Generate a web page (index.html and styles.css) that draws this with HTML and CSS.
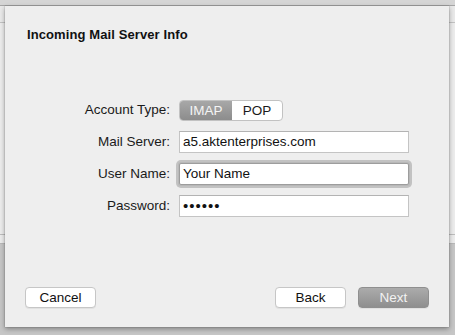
FILE: index.html
```html
<!DOCTYPE html>
<html>
<head>
<meta charset="utf-8">
<link rel="stylesheet" href="styles.css">
</head>
<body>
<div class="topbar"></div>
<div class="window">
  <div class="side">
    <div class="s1"></div><div class="s2"></div><div class="s3"></div>
  </div>
  <div class="center">
    <div class="sheet">
      <h1 class="title">Incoming Mail Server Info</h1>
      <div class="form">
        <div class="label">Account Type:</div>
        <div class="seg"><span class="seg-item on">IMAP</span><span class="seg-item off">POP</span></div>
        <div class="label">Mail Server:</div>
        <div class="field">a5.aktenterprises.com</div>
        <div class="label">User Name:</div>
        <div class="field focus">Your Name</div>
        <div class="label">Password:</div>
        <div class="field pw">••••••</div>
      </div>
      <div class="buttons">
        <button class="btn">Cancel</button>
        <div class="right">
          <button class="btn">Back</button>
          <button class="btn primary">Next</button>
        </div>
      </div>
    </div>
  </div>
  <div class="side">
    <div class="s1"></div><div class="s2"></div><div class="s3"></div>
  </div>
</div>
</body>
</html>
```
FILE: styles.css
```css
html, body {
  margin: 0;
  padding: 0;
}
body {
  width: 455px;
  height: 335px;
  overflow: hidden;
  background: #c6c6c6;
  font-family: "Liberation Sans", Arial, sans-serif;
  font-size: 13px;
  color: #1a1a1a;
}
.topbar {
  height: 5px;
  background: #d5d5d5;
  border-bottom: 1px solid #a6a6a6;
}
.window {
  display: grid;
  grid-template-columns: 5px 444px 6px;
  height: 329px;
  background: #c6c6c6;
}
.side {
  display: flex;
  flex-direction: column;
}
.s1 {
  height: 16px;
  background: #e9e9e9;
  border-bottom: 1px solid #c2c2c2;
}
.s2 {
  height: 211px;
  background: #ececec;
  border-bottom: 1px solid #bdbdbd;
}
.s3 {
  height: 8px;
  background: #ececec;
  border-bottom: 1px solid #b8b8b8;
}
.center {
  position: relative;
  z-index: 1;
}
.sheet {
  height: 321px;
  box-sizing: border-box;
  background: #eeeeee;
  box-shadow: 0 2px 5px rgba(0, 0, 0, 0.35), 0 0 1px rgba(0, 0, 0, 0.4);
  display: flex;
  flex-direction: column;
  padding: 21px 20px 19px 20px;
}
.title {
  margin: 0 0 0 2px;
  font-size: 13px;
  line-height: 16px;
  font-weight: bold;
  color: #111;
  letter-spacing: 0.1px;
}
.form {
  margin-top: 56px;
  margin-left: -20px;
  display: grid;
  grid-template-columns: 165px 230px;
  column-gap: 9px;
  row-gap: 10px;
  align-items: center;
  font-size: 13.5px;
}
.label {
  text-align: right;
  line-height: 22px;
  color: #1a1a1a;
}
.seg {
  display: flex;
  width: max-content;
  height: 21px;
  box-sizing: border-box;
  border: 1px solid #c2c2c2;
  border-radius: 4px;
  background: #fff;
  overflow: hidden;
}
.seg-item {
  line-height: 19px;
  text-align: center;
  color: #1a1a1a;
}
.seg-item.on {
  background: linear-gradient(#a8a8a8, #8c8c8c);
  color: #f4f4f4;
  width: 52px;
}
.seg-item.off {
  width: 50px;
}
.field {
  height: 22px;
  box-sizing: border-box;
  background: #fff;
  border: 1px solid #c4c4c4;
  border-top-color: #b3b3b3;
  padding: 0 3px;
  line-height: 20px;
  color: #111;
}
.field.focus {
  box-shadow: 0 0 0 1px #b8b8b8, 0 0 0 3px #c2c2c2;
  border-radius: 2px;
  border-color: #9d9d9d;
}
.field.pw {
  font-size: 15px;
  letter-spacing: 1px;
  line-height: 20px;
}
.buttons {
  margin-top: auto;
  display: flex;
  justify-content: space-between;
  align-items: center;
}
.right {
  display: flex;
  gap: 12px;
}
.btn {
  width: 71px;
  height: 21px;
  box-sizing: border-box;
  padding: 0;
  background: #fff;
  border: 1px solid #c6c6c6;
  border-radius: 4px;
  font-family: "Liberation Sans", Arial, sans-serif;
  font-size: 13.5px;
  color: #111;
  box-shadow: 0 1px 0 rgba(0, 0, 0, 0.05);
}
.btn.primary {
  background: linear-gradient(#ababab, #8f8f8f);
  border-color: #8f8f8f;
  color: #f2f2f2;
}
```
